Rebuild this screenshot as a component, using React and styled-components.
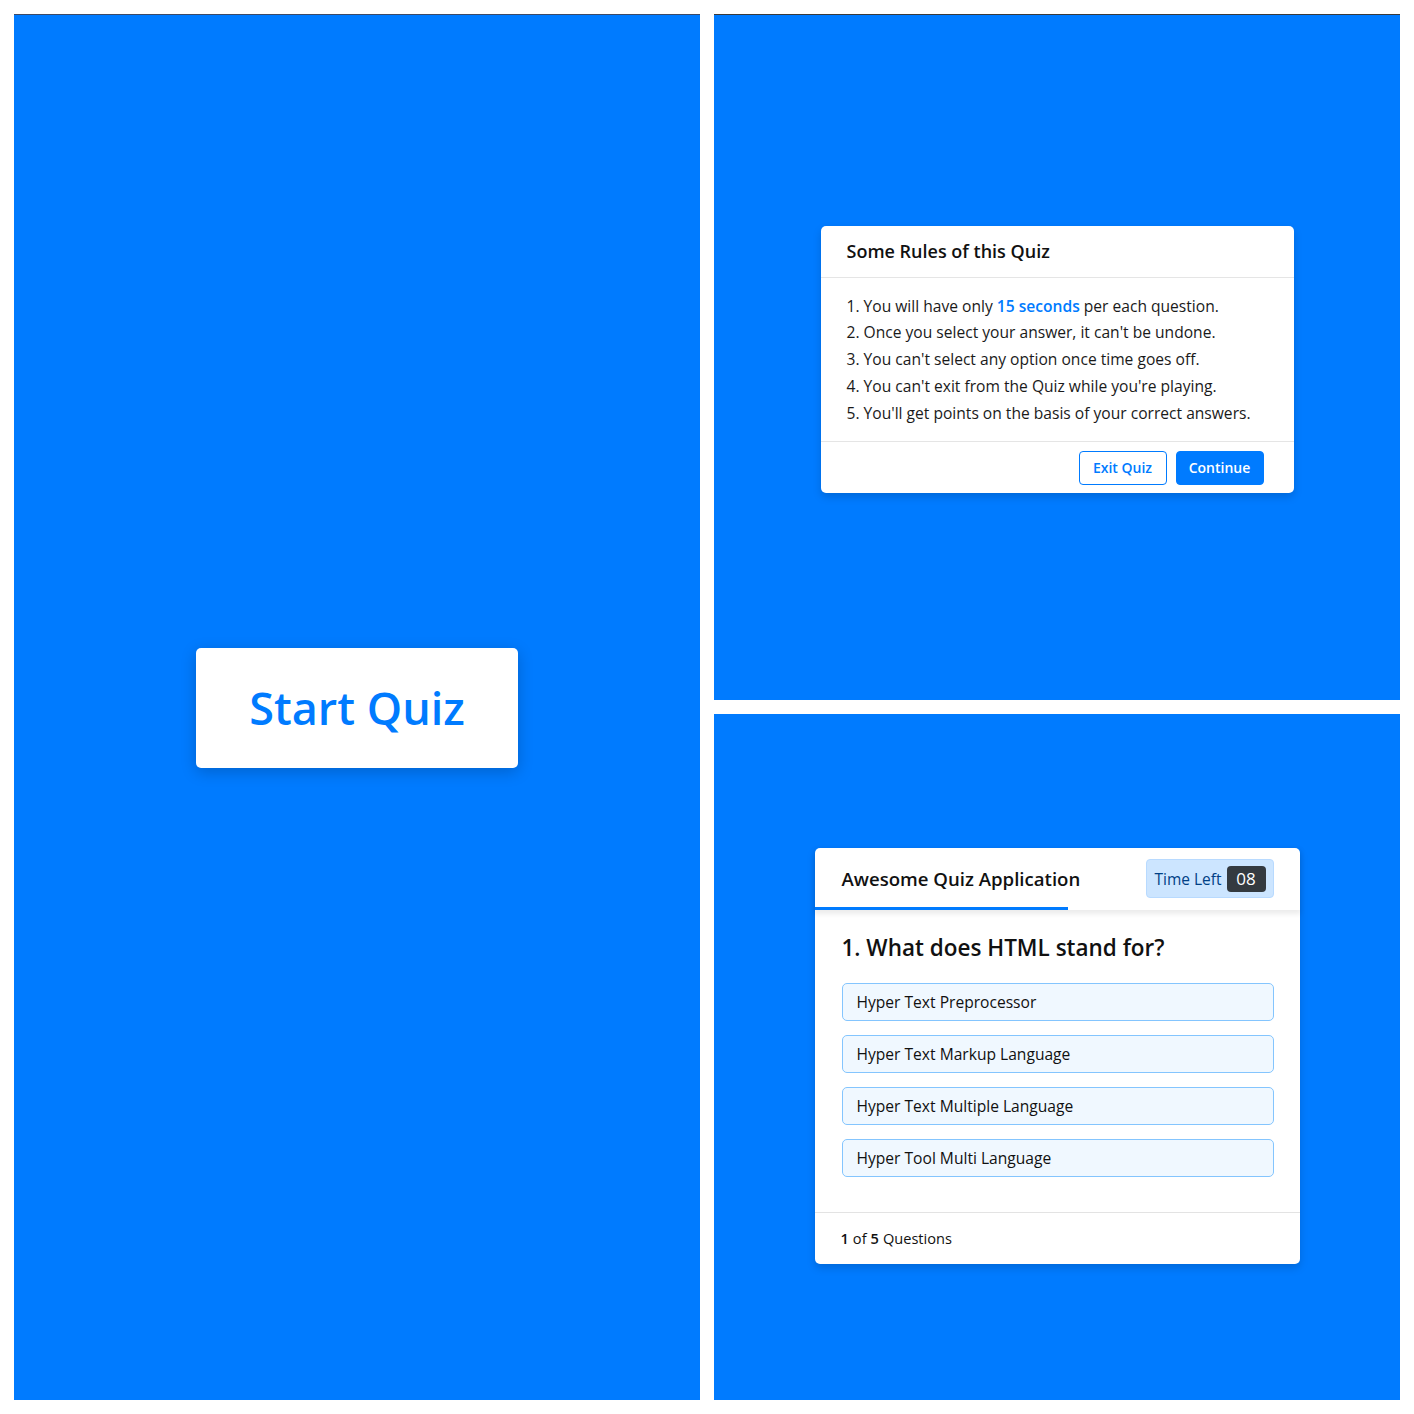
import React from "react";
import styled, { createGlobalStyle } from "styled-components";

const GlobalStyle = createGlobalStyle`
  * { box-sizing: border-box; }
  body {
    margin: 0;
    background: #fff;
    font-family: "Open Sans", "Noto Sans", sans-serif;
  }
`;

const Board = styled.div`
  display: grid;
  grid-template-columns: 686px 686px;
  grid-template-rows: 686px 686px;
  gap: 14px;
  padding: 14px;
`;

const Panel = styled.div`
  background: #007bff;
  display: flex;
  align-items: center;
  justify-content: center;
  grid-row: ${props => props.tall ? "span 2" : "auto"};
  border-top: 1px solid ${props => props.edge || "#007bff"};
`;

const StartButton = styled.button`
  width: 322px;
  height: 120px;
  background: #fff;
  border: none;
  border-radius: 5px;
  color: #007bff;
  font-family: "Open Sans", sans-serif;
  font-size: 45px;
  font-weight: 600;
  box-shadow: 0 4px 16px rgba(0, 0, 0, 0.2);
  cursor: pointer;
`;

const Card = styled.div`
  width: ${props => props.w}px;
  margin-top: ${props => props.shift || 0}px;
  background: #fff;
  border-radius: 5px;
  box-shadow: 0 4px 8px rgba(0, 0, 0, 0.15);
  color: #111;
`;

const RulesHead = styled.div`
  height: 52px;
  display: flex;
  align-items: center;
  padding: 0 26px;
  border-bottom: 1px solid #e5e5e5;
  font-size: 18px;
  font-weight: 600;
`;

const RulesList = styled.div`
  padding: 15px 26px 15px;
  display: flex;
  flex-direction: column;
`;

const Rule = styled.div`
  font-size: 15.6px;
  line-height: 26.8px;
  color: #1a1a1a;
  white-space: nowrap;

  span {
    color: #007bff;
    font-weight: 600;
  }
`;

const RulesFoot = styled.div`
  height: 52px;
  display: flex;
  align-items: center;
  justify-content: flex-end;
  gap: 9px;
  padding: 0 30px;
  border-top: 1px solid #e5e5e5;
`;

const Btn = styled.button`
  height: 34px;
  width: ${props => props.w}px;
  border-radius: 4px;
  font-family: "Open Sans", sans-serif;
  font-size: 14px;
  font-weight: 600;
  border: 1px solid #007bff;
  color: ${props => props.primary ? "#fff" : "#007bff"};
  background: ${props => props.primary ? "#007bff" : "#fff"};
  cursor: pointer;
`;

const QuizHead = styled.header`
  position: relative;
  height: 62px;
  display: flex;
  align-items: center;
  justify-content: space-between;
  padding: 0 26px 0 27px;
  box-shadow: 0 3px 5px 1px rgba(0, 0, 0, 0.08);
`;

const HeadTitle = styled.div`
  font-size: 18.6px;
  font-weight: 600;
`;

const Timer = styled.div`
  height: 39px;
  width: 128px;
  display: flex;
  align-items: center;
  justify-content: space-between;
  padding: 0 7px 0 8px;
  background: #cce5ff;
  border: 1px solid #b8daff;
  border-radius: 4px;
  color: #004085;
  font-size: 15.5px;
  white-space: nowrap;
`;

const TimerSec = styled.div`
  height: 26px;
  width: 39px;
  display: flex;
  align-items: center;
  justify-content: center;
  background: #343a40;
  border-radius: 4px;
  color: #fff;
  font-size: 17px;
  font-weight: 500;
`;

const TimeLine = styled.div`
  position: absolute;
  left: 0;
  bottom: 0;
  height: 3px;
  background: #007bff;
`;

const QuizBody = styled.section`
  padding: 22px 26px 35px 27px;
`;

const Question = styled.div`
  font-size: 22.5px;
  font-weight: 600;
  line-height: 32px;
  margin-bottom: 19px;
`;

const Options = styled.div`
  display: flex;
  flex-direction: column;
  gap: 14px;
`;

const Option = styled.div`
  height: 38px;
  display: flex;
  align-items: center;
  padding: 0 14px;
  background: aliceblue;
  border: 1px solid #84c5fe;
  border-radius: 5px;
  font-size: 15.6px;
  color: #111;
`;

const QuizFoot = styled.footer`
  height: 52px;
  display: flex;
  align-items: center;
  padding: 0 27px 0 26px;
  border-top: 1px solid #e3e3e3;
  font-size: 14.6px;

  b {
    font-weight: 600;
    margin: 0 4px;
  }
  b:first-child { margin-left: 0; }
`;

const rules = [
  "2. Once you select your answer, it can't be undone.",
  "3. You can't select any option once time goes off.",
  "4. You can't exit from the Quiz while you're playing.",
  "5. You'll get points on the basis of your correct answers.",
];

const options = [
  "Hyper Text Preprocessor",
  "Hyper Text Markup Language",
  "Hyper Text Multiple Language",
  "Hyper Tool Multi Language",
];

export default function App() {
  const progress = 253;
  return (
    <>
      <GlobalStyle />
      <Board>
        <Panel tall edge="#3d4a66">
          <StartButton>Start Quiz</StartButton>
        </Panel>

        <Panel edge="#3a3a3a">
          <Card w={473} shift={4}>
            <RulesHead>Some Rules of this Quiz</RulesHead>
            <RulesList>
              <Rule>1. You will have only <span>15 seconds</span> per each question.</Rule>
              {rules.map(r => <Rule key={r}>{r}</Rule>)}
            </RulesList>
            <RulesFoot>
              <Btn w={88}>Exit Quiz</Btn>
              <Btn w={88} primary>Continue</Btn>
            </RulesFoot>
          </Card>
        </Panel>

        <Panel>
          <Card w={485} shift={-4}>
            <QuizHead>
              <HeadTitle>Awesome Quiz Application</HeadTitle>
              <Timer>
                Time Left
                <TimerSec>08</TimerSec>
              </Timer>
              <TimeLine style={{ width: progress }} />
            </QuizHead>
            <QuizBody>
              <Question>1. What does HTML stand for?</Question>
              <Options>
                {options.map(o => <Option key={o}>{o}</Option>)}
              </Options>
            </QuizBody>
            <QuizFoot>
              <b>1</b> of <b>5</b> Questions
            </QuizFoot>
          </Card>
        </Panel>
      </Board>
    </>
  );
}
